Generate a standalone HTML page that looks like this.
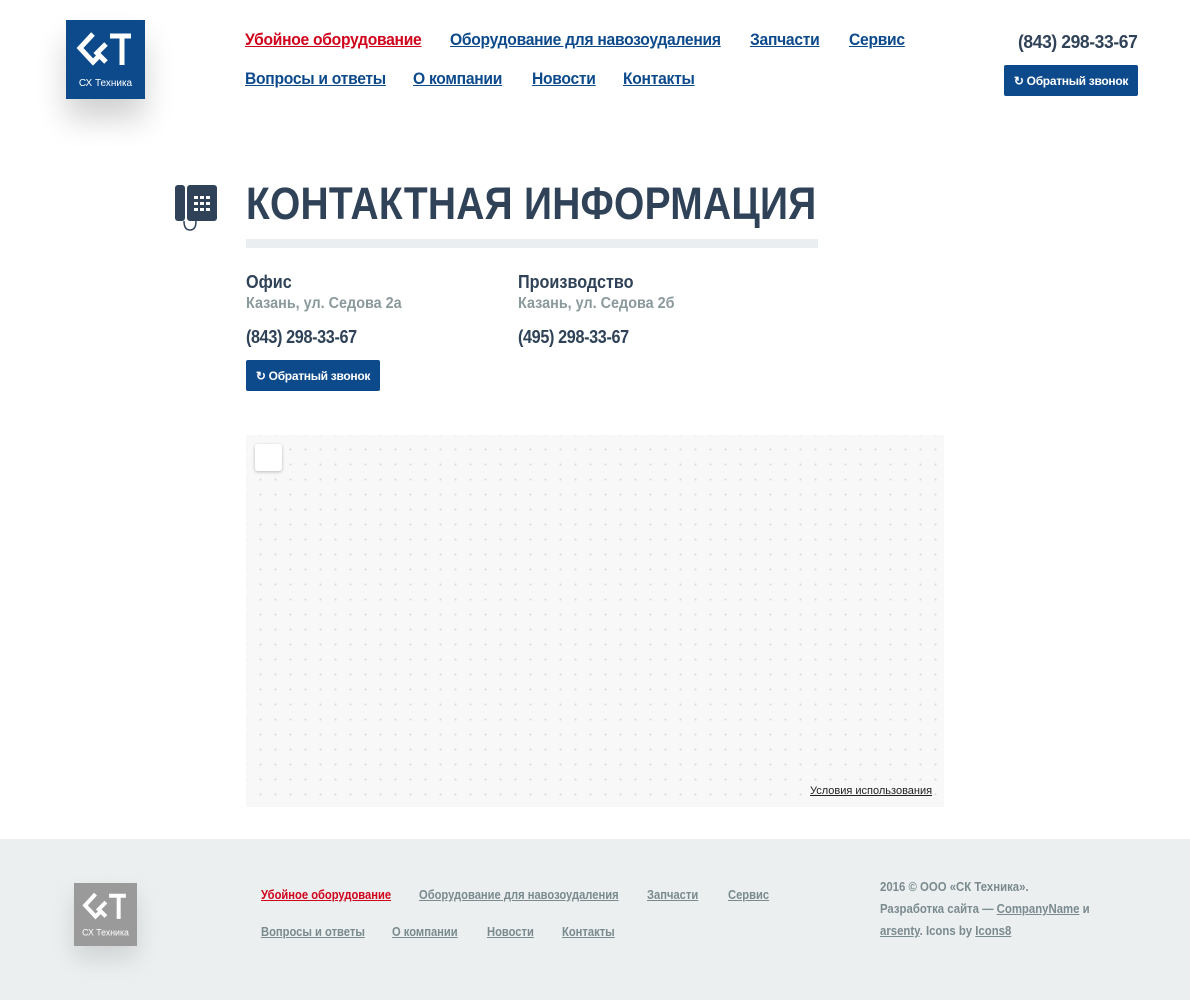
<!DOCTYPE html>
<html><head><meta charset="utf-8"><style>
*{margin:0;padding:0;box-sizing:border-box}
body{width:1190px;height:1000px;background:#fff;font-family:"Liberation Sans",sans-serif;position:relative;overflow:hidden;color:#2f4257}
.a{position:absolute;white-space:nowrap}
.nav a{color:#0d4a8c;text-decoration:underline;font-size:17px;font-weight:bold;letter-spacing:-0.3px;transform:scaleX(.92);transform-origin:left}
.nav a.r{color:#d0021b}
.btn{position:absolute;background:#0d4a8c;color:#fff;font-size:12px;font-weight:bold;border-radius:2px;display:flex;align-items:center;justify-content:center;letter-spacing:-0.3px}
.logo{position:absolute;background:#0d4a8c;box-shadow:0 20px 30px rgba(0,0,0,.18)}
.f a{color:#7a8a8f;text-decoration:underline;font-size:13px;font-weight:bold;transform:scaleX(.86);transform-origin:left}
.f a.r{color:#d0021b}
.sx{transform:scaleX(.9);transform-origin:left}
.map{position:absolute;left:246px;top:435px;width:698px;height:372px;background-color:#f8f8f8;background-image:radial-gradient(circle,#dcdcdc 0.9px,transparent 1.2px);background-size:15px 15px;background-position:7px 7px}
</style></head><body>
<div class="logo" style="left:66px;top:20px;width:79px;height:79px">
<svg width="79" height="79" viewBox="0 0 79 79"><g fill="none" stroke="#fff" stroke-width="5" stroke-linejoin="miter"><path d="M27 14 L14 28 L27 42 L34 35"/><path d="M40 24 L31 33 L40 42"/><path d="M44 16 H65 M56 16 V45"/></g><text x="39.5" y="66" fill="#fff" font-size="10" text-anchor="middle" font-family="Liberation Sans">СХ Техника</text></svg>
</div>
<div class="nav">
<a class="a r" style="left:245px;top:30px">Убойное оборудование</a>
<a class="a" style="left:450px;top:30px">Оборудование для навозоудаления</a>
<a class="a" style="left:750px;top:30px">Запчасти</a>
<a class="a" style="left:849px;top:30px">Сервис</a>
<a class="a" style="left:245px;top:69px">Вопросы и ответы</a>
<a class="a" style="left:413px;top:69px">О компании</a>
<a class="a" style="left:532px;top:69px">Новости</a>
<a class="a" style="left:623px;top:69px">Контакты</a>
</div>
<div class="a sx" style="left:1018px;top:32px;font-size:18px;font-weight:bold;letter-spacing:-0.4px;transform:scaleX(.97)">(843) 298-33-67</div>
<div class="btn" style="left:1004px;top:65px;width:134px;height:31px">↻ Обратный звонок</div>

<svg class="a" style="left:174px;top:184px" width="45" height="48" viewBox="0 0 45 48"><rect x="1" y="1" width="10" height="36" rx="3" fill="#2f4257"/><rect x="13" y="1" width="30" height="36" rx="3" fill="#2f4257"/><g fill="#fff"><rect x="20" y="12" width="4" height="3"/><rect x="26" y="12" width="4" height="3"/><rect x="32" y="12" width="4" height="3"/><rect x="20" y="18" width="4" height="3"/><rect x="26" y="18" width="4" height="3"/><rect x="32" y="18" width="4" height="3"/><rect x="20" y="24" width="4" height="3"/><rect x="26" y="24" width="4" height="3"/><rect x="32" y="24" width="4" height="3"/></g><path d="M10 37 Q10 46 16 46 Q22 46 22 37" fill="none" stroke="#2f4257" stroke-width="1.5"/></svg>
<div class="a" style="left:246px;top:178px;font-size:45px;font-weight:bold;transform:scaleX(0.865);transform-origin:left;letter-spacing:0.3px">КОНТАКТНАЯ ИНФОРМАЦИЯ</div>
<div class="a" style="left:246px;top:239px;width:572px;height:9px;background:#eaeef0"></div>

<div class="a sx" style="left:246px;top:272px;font-size:18px;font-weight:bold">Офис</div>
<div class="a sx" style="left:246px;top:295px;font-size:16px;font-weight:bold;color:#8a999c">Казань, ул. Седова 2а</div>
<div class="a sx" style="left:246px;top:327px;font-size:18px;font-weight:bold;letter-spacing:-0.4px">(843) 298-33-67</div>
<div class="btn" style="left:246px;top:360px;width:134px;height:31px">↻ Обратный звонок</div>
<div class="a sx" style="left:518px;top:272px;font-size:18px;font-weight:bold">Производство</div>
<div class="a sx" style="left:518px;top:295px;font-size:16px;font-weight:bold;color:#8a999c">Казань, ул. Седова 2б</div>
<div class="a sx" style="left:518px;top:327px;font-size:18px;font-weight:bold;letter-spacing:-0.4px">(495) 298-33-67</div>

<div class="map"></div>
<div class="a" style="left:255px;top:444px;width:27px;height:27px;background:#fff;border-radius:3px;box-shadow:0 1px 3px rgba(0,0,0,.25)"></div>
<div class="a" style="left:810px;top:785px;font-size:11px;color:#222;text-decoration:underline">Условия использования</div>

<div class="a" style="left:0;top:839px;width:1190px;height:161px;background:#ebeff0"></div>
<div class="logo" style="left:74px;top:883px;width:63px;height:63px;background:#9a9a9a;box-shadow:0 12px 24px rgba(0,0,0,.12)">
<svg width="63" height="63" viewBox="0 0 79 79"><g fill="none" stroke="#fff" stroke-width="5"><path d="M27 14 L14 28 L27 42 L34 35"/><path d="M40 24 L31 33 L40 42"/><path d="M44 16 H65 M56 16 V45"/></g><text x="39.5" y="66" fill="#fff" font-size="11" text-anchor="middle" font-family="Liberation Sans">СХ Техника</text></svg>
</div>
<div class="f">
<a class="a r" style="left:261px;top:887px">Убойное оборудование</a>
<a class="a" style="left:419px;top:887px">Оборудование для навозоудаления</a>
<a class="a" style="left:647px;top:887px">Запчасти</a>
<a class="a" style="left:728px;top:887px">Сервис</a>
<a class="a" style="left:261px;top:924px">Вопросы и ответы</a>
<a class="a" style="left:392px;top:924px">О компании</a>
<a class="a" style="left:487px;top:924px">Новости</a>
<a class="a" style="left:562px;top:924px">Контакты</a>
</div>
<div class="a" style="left:880px;top:876px;font-size:12.5px;line-height:22px;color:#7a8a8f;font-weight:bold;transform:scaleX(.91);transform-origin:left">2016 © ООО «СК Техника».<br>Разработка сайта — <u>CompanyName</u> и<br><u>arsenty</u>. Icons by <u>Icons8</u></div>
</body></html>
